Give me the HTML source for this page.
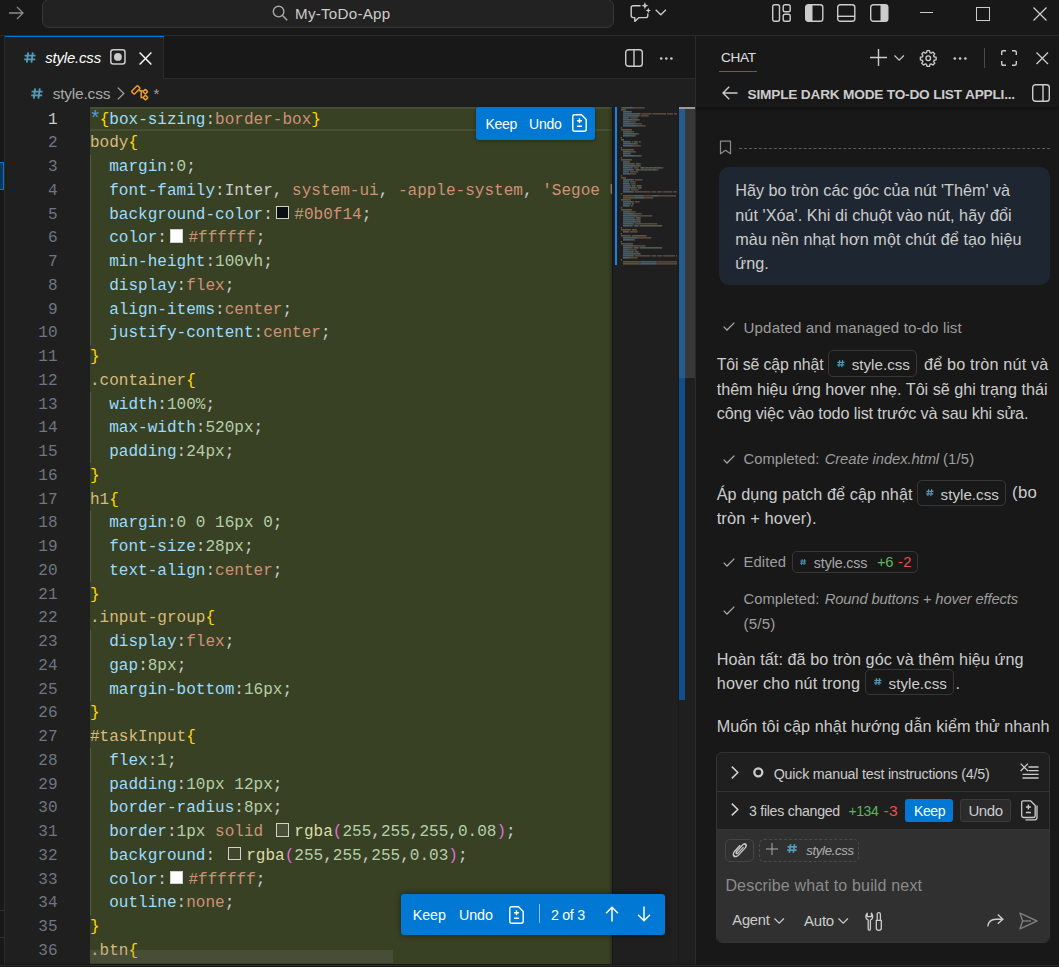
<!DOCTYPE html>
<html><head><meta charset="utf-8">
<style>
*{box-sizing:border-box;margin:0;padding:0}
html,body{width:1059px;height:967px;overflow:hidden;background:#181818;font-family:"Liberation Sans",sans-serif;color:#cccccc}
.a{position:absolute}
svg{position:absolute;overflow:visible}
#title{left:0;top:0;width:1059px;height:36px;background:#181818;border-bottom:1px solid #2b2b2b}
#search{left:42px;top:-1px;width:572px;height:29px;background:#222222;border:1px solid #363636;border-radius:7px}
#editor{left:5px;top:36px;width:691px;height:928px;background:#1f1f1f;border-right:1px solid #2b2b2b}
#tabbar{left:0;top:0;width:690px;height:43px;background:#181818;border-bottom:1px solid #2b2b2b}
#tab{left:0;top:0;width:159px;height:43px;background:#1f1f1f;border-right:1px solid #2b2b2b}
#code{left:85px;top:71px;width:522px;height:857px;background:#394124}
.ln{position:absolute;left:5px;width:52.6px;padding-top:1.5px;text-align:right;font-family:"Liberation Mono",monospace;font-size:16.04px;color:#6e7681;line-height:23.75px}
.cl{position:absolute;left:90px;padding-top:1.5px;white-space:pre;font-family:"Liberation Mono",monospace;font-size:16.04px;line-height:23.75px;color:#cccccc}
#chat{left:696px;top:36px;width:363px;height:928px;background:#181818}
.dec{display:inline-block;width:13.5px;height:13.5px;border:1px solid #d0d0d0;margin:0 5px 0 3px;position:relative;top:2px;vertical-align:top}
.ui{font-family:"Liberation Sans",sans-serif;white-space:nowrap;line-height:1}
.chip{border:1px solid #363636;border-radius:5px}
#status{left:0;top:964.5px;width:1059px;height:3px;background:#181818;border-top:1px solid #2b2b2b}
</style></head><body>
<div id="title" class="a">
  <svg style="left:8px;top:6px" width="16" height="14" viewBox="0 0 16 14"><path d="M1 7H15M9 1L15 7L9 13" fill="none" stroke="#8a8a8a" stroke-width="1.3"/></svg>
  <div id="search" class="a"></div>
</div>
<div id="sidebar" class="a" style="left:0;top:36px;width:5px;height:928px;background:#181818;border-right:1px solid #2b2b2b"></div>
<div id="editor" class="a">
  <div id="tabbar" class="a"><div id="tab" class="a"></div><div class="a" style="left:0;top:0;width:158.5px;height:1.4px;background:#0078d4"></div></div>
  <div id="code" class="a"></div>
</div>
<div id="lines" class="a" style="left:0;top:107px;width:612px;height:857px;overflow:hidden">
<div class="ln" style="top:0.00px;color:#cccccc">1</div>
<div class="cl" style="top:0.00px"><span style="color:#569cd6;font-size:20px;line-height:0;letter-spacing:-2.375px;position:relative;left:-0.8px;top:1.8px">*</span><span style="color:#ffd700">{</span><span style="color:#9cdcfe">box-sizing</span><span style="color:#cccccc">:</span><span style="color:#ce9178">border-box</span><span style="color:#ffd700">}</span></div>
<div class="ln" style="top:23.75px;color:#6e7681">2</div>
<div class="cl" style="top:23.75px"><span style="color:#d7ba7d">body</span><span style="color:#ffd700">{</span></div>
<div class="ln" style="top:47.50px;color:#6e7681">3</div>
<div class="cl" style="top:47.50px"><span style="color:#cccccc">  </span><span style="color:#9cdcfe">margin</span><span style="color:#cccccc">:</span><span style="color:#b5cea8">0</span><span style="color:#cccccc">;</span></div>
<div class="ln" style="top:71.25px;color:#6e7681">4</div>
<div class="cl" style="top:71.25px"><span style="color:#cccccc">  </span><span style="color:#9cdcfe">font-family</span><span style="color:#cccccc">:Inter, </span><span style="color:#ce9178">system-ui</span><span style="color:#cccccc">, </span><span style="color:#ce9178">-apple-system</span><span style="color:#cccccc">, </span><span style="color:#ce9178">&#x27;Segoe UI&#x27;</span></div>
<div class="ln" style="top:95.00px;color:#6e7681">5</div>
<div class="cl" style="top:95.00px"><span style="color:#cccccc">  </span><span style="color:#9cdcfe">background-color</span><span style="color:#cccccc">:</span><i class="dec" style="background:#0b0f14"></i><span style="color:#ce9178">#0b0f14</span><span style="color:#cccccc">;</span></div>
<div class="ln" style="top:118.75px;color:#6e7681">6</div>
<div class="cl" style="top:118.75px"><span style="color:#cccccc">  </span><span style="color:#9cdcfe">color</span><span style="color:#cccccc">:</span><i class="dec" style="background:#ffffff"></i><span style="color:#ce9178">#ffffff</span><span style="color:#cccccc">;</span></div>
<div class="ln" style="top:142.50px;color:#6e7681">7</div>
<div class="cl" style="top:142.50px"><span style="color:#cccccc">  </span><span style="color:#9cdcfe">min-height</span><span style="color:#cccccc">:</span><span style="color:#b5cea8">100vh</span><span style="color:#cccccc">;</span></div>
<div class="ln" style="top:166.25px;color:#6e7681">8</div>
<div class="cl" style="top:166.25px"><span style="color:#cccccc">  </span><span style="color:#9cdcfe">display</span><span style="color:#cccccc">:</span><span style="color:#ce9178">flex</span><span style="color:#cccccc">;</span></div>
<div class="ln" style="top:190.00px;color:#6e7681">9</div>
<div class="cl" style="top:190.00px"><span style="color:#cccccc">  </span><span style="color:#9cdcfe">align-items</span><span style="color:#cccccc">:</span><span style="color:#ce9178">center</span><span style="color:#cccccc">;</span></div>
<div class="ln" style="top:213.75px;color:#6e7681">10</div>
<div class="cl" style="top:213.75px"><span style="color:#cccccc">  </span><span style="color:#9cdcfe">justify-content</span><span style="color:#cccccc">:</span><span style="color:#ce9178">center</span><span style="color:#cccccc">;</span></div>
<div class="ln" style="top:237.50px;color:#6e7681">11</div>
<div class="cl" style="top:237.50px"><span style="color:#ffd700">}</span></div>
<div class="ln" style="top:261.25px;color:#6e7681">12</div>
<div class="cl" style="top:261.25px"><span style="color:#d7ba7d">.container</span><span style="color:#ffd700">{</span></div>
<div class="ln" style="top:285.00px;color:#6e7681">13</div>
<div class="cl" style="top:285.00px"><span style="color:#cccccc">  </span><span style="color:#9cdcfe">width</span><span style="color:#cccccc">:</span><span style="color:#b5cea8">100%</span><span style="color:#cccccc">;</span></div>
<div class="ln" style="top:308.75px;color:#6e7681">14</div>
<div class="cl" style="top:308.75px"><span style="color:#cccccc">  </span><span style="color:#9cdcfe">max-width</span><span style="color:#cccccc">:</span><span style="color:#b5cea8">520px</span><span style="color:#cccccc">;</span></div>
<div class="ln" style="top:332.50px;color:#6e7681">15</div>
<div class="cl" style="top:332.50px"><span style="color:#cccccc">  </span><span style="color:#9cdcfe">padding</span><span style="color:#cccccc">:</span><span style="color:#b5cea8">24px</span><span style="color:#cccccc">;</span></div>
<div class="ln" style="top:356.25px;color:#6e7681">16</div>
<div class="cl" style="top:356.25px"><span style="color:#ffd700">}</span></div>
<div class="ln" style="top:380.00px;color:#6e7681">17</div>
<div class="cl" style="top:380.00px"><span style="color:#d7ba7d">h1</span><span style="color:#ffd700">{</span></div>
<div class="ln" style="top:403.75px;color:#6e7681">18</div>
<div class="cl" style="top:403.75px"><span style="color:#cccccc">  </span><span style="color:#9cdcfe">margin</span><span style="color:#cccccc">:</span><span style="color:#b5cea8">0 0 16px 0</span><span style="color:#cccccc">;</span></div>
<div class="ln" style="top:427.50px;color:#6e7681">19</div>
<div class="cl" style="top:427.50px"><span style="color:#cccccc">  </span><span style="color:#9cdcfe">font-size</span><span style="color:#cccccc">:</span><span style="color:#b5cea8">28px</span><span style="color:#cccccc">;</span></div>
<div class="ln" style="top:451.25px;color:#6e7681">20</div>
<div class="cl" style="top:451.25px"><span style="color:#cccccc">  </span><span style="color:#9cdcfe">text-align</span><span style="color:#cccccc">:</span><span style="color:#ce9178">center</span><span style="color:#cccccc">;</span></div>
<div class="ln" style="top:475.00px;color:#6e7681">21</div>
<div class="cl" style="top:475.00px"><span style="color:#ffd700">}</span></div>
<div class="ln" style="top:498.75px;color:#6e7681">22</div>
<div class="cl" style="top:498.75px"><span style="color:#d7ba7d">.input-group</span><span style="color:#ffd700">{</span></div>
<div class="ln" style="top:522.50px;color:#6e7681">23</div>
<div class="cl" style="top:522.50px"><span style="color:#cccccc">  </span><span style="color:#9cdcfe">display</span><span style="color:#cccccc">:</span><span style="color:#ce9178">flex</span><span style="color:#cccccc">;</span></div>
<div class="ln" style="top:546.25px;color:#6e7681">24</div>
<div class="cl" style="top:546.25px"><span style="color:#cccccc">  </span><span style="color:#9cdcfe">gap</span><span style="color:#cccccc">:</span><span style="color:#b5cea8">8px</span><span style="color:#cccccc">;</span></div>
<div class="ln" style="top:570.00px;color:#6e7681">25</div>
<div class="cl" style="top:570.00px"><span style="color:#cccccc">  </span><span style="color:#9cdcfe">margin-bottom</span><span style="color:#cccccc">:</span><span style="color:#b5cea8">16px</span><span style="color:#cccccc">;</span></div>
<div class="ln" style="top:593.75px;color:#6e7681">26</div>
<div class="cl" style="top:593.75px"><span style="color:#ffd700">}</span></div>
<div class="ln" style="top:617.50px;color:#6e7681">27</div>
<div class="cl" style="top:617.50px"><span style="color:#d7ba7d">#taskInput</span><span style="color:#ffd700">{</span></div>
<div class="ln" style="top:641.25px;color:#6e7681">28</div>
<div class="cl" style="top:641.25px"><span style="color:#cccccc">  </span><span style="color:#9cdcfe">flex</span><span style="color:#cccccc">:</span><span style="color:#b5cea8">1</span><span style="color:#cccccc">;</span></div>
<div class="ln" style="top:665.00px;color:#6e7681">29</div>
<div class="cl" style="top:665.00px"><span style="color:#cccccc">  </span><span style="color:#9cdcfe">padding</span><span style="color:#cccccc">:</span><span style="color:#b5cea8">10px 12px</span><span style="color:#cccccc">;</span></div>
<div class="ln" style="top:688.75px;color:#6e7681">30</div>
<div class="cl" style="top:688.75px"><span style="color:#cccccc">  </span><span style="color:#9cdcfe">border-radius</span><span style="color:#cccccc">:</span><span style="color:#b5cea8">8px</span><span style="color:#cccccc">;</span></div>
<div class="ln" style="top:712.50px;color:#6e7681">31</div>
<div class="cl" style="top:712.50px"><span style="color:#cccccc">  </span><span style="color:#9cdcfe">border</span><span style="color:#cccccc">:</span><span style="color:#b5cea8">1px</span><span style="color:#cccccc"> </span><span style="color:#ce9178">solid</span><span style="color:#cccccc"> </span><i class="dec" style="background:rgba(255,255,255,0.08)"></i><span style="color:#dcdcaa">rgba</span><span style="color:#da70d6">(</span><span style="color:#b5cea8">255</span><span style="color:#cccccc">,</span><span style="color:#b5cea8">255</span><span style="color:#cccccc">,</span><span style="color:#b5cea8">255</span><span style="color:#cccccc">,</span><span style="color:#b5cea8">0.08</span><span style="color:#da70d6">)</span><span style="color:#cccccc">;</span></div>
<div class="ln" style="top:736.25px;color:#6e7681">32</div>
<div class="cl" style="top:736.25px"><span style="color:#cccccc">  </span><span style="color:#9cdcfe">background</span><span style="color:#cccccc">: </span><i class="dec" style="background:rgba(255,255,255,0.03)"></i><span style="color:#dcdcaa">rgba</span><span style="color:#da70d6">(</span><span style="color:#b5cea8">255</span><span style="color:#cccccc">,</span><span style="color:#b5cea8">255</span><span style="color:#cccccc">,</span><span style="color:#b5cea8">255</span><span style="color:#cccccc">,</span><span style="color:#b5cea8">0.03</span><span style="color:#da70d6">)</span><span style="color:#cccccc">;</span></div>
<div class="ln" style="top:760.00px;color:#6e7681">33</div>
<div class="cl" style="top:760.00px"><span style="color:#cccccc">  </span><span style="color:#9cdcfe">color</span><span style="color:#cccccc">:</span><i class="dec" style="background:#ffffff"></i><span style="color:#ce9178">#ffffff</span><span style="color:#cccccc">;</span></div>
<div class="ln" style="top:783.75px;color:#6e7681">34</div>
<div class="cl" style="top:783.75px"><span style="color:#cccccc">  </span><span style="color:#9cdcfe">outline</span><span style="color:#cccccc">:</span><span style="color:#ce9178">none</span><span style="color:#cccccc">;</span></div>
<div class="ln" style="top:807.50px;color:#6e7681">35</div>
<div class="cl" style="top:807.50px"><span style="color:#ffd700">}</span></div>
<div class="ln" style="top:831.25px;color:#6e7681">36</div>
<div class="cl" style="top:831.25px"><span style="color:#d7ba7d">.btn</span><span style="color:#ffd700">{</span></div>
</div>
<div id="chat" class="a">
</div>
<!-- editor decorations -->
<div class="a" style="left:90px;top:107px;width:522px;height:2px;background:#474f33"></div>
<div class="a" style="left:90px;top:129px;width:522px;height:2px;background:#474f33"></div>
<div class="a" style="left:615px;top:107px;width:2.2px;height:158px;background:#1b81e8"></div>
<!-- indent guides --><div class="a" style="left:90px;top:154.5px;width:1.1px;height:190.0px;background:#525c3f"></div><div class="a" style="left:90px;top:392.0px;width:1.1px;height:71.25px;background:#525c3f"></div><div class="a" style="left:90px;top:510.75px;width:1.1px;height:71.25px;background:#525c3f"></div><div class="a" style="left:90px;top:629.5px;width:1.1px;height:71.25px;background:#525c3f"></div><div class="a" style="left:90px;top:748.25px;width:1.1px;height:166.25px;background:#525c3f"></div>
<!-- minimap shadow --><div class="a" style="left:608px;top:107px;width:4.5px;height:857px;background:linear-gradient(90deg,rgba(0,0,0,0),rgba(0,0,0,0.3))"></div>
<svg style="left:621px;top:107px;opacity:0.42" width="60" height="158"><rect x="0.0" y="0.2" width="1.0" height="1.3" fill="#569cd6"/><rect x="1.0" y="0.2" width="1.0" height="1.3" fill="#ffd700"/><rect x="2.0" y="0.2" width="9.8" height="1.3" fill="#9cdcfe"/><rect x="11.8" y="0.2" width="1.0" height="1.3" fill="#cccccc"/><rect x="12.7" y="0.2" width="9.8" height="1.3" fill="#ce9178"/><rect x="22.5" y="0.2" width="1.0" height="1.3" fill="#ffd700"/><rect x="0.0" y="2.2" width="3.9" height="1.3" fill="#d7ba7d"/><rect x="3.9" y="2.2" width="1.0" height="1.3" fill="#ffd700"/><rect x="2.0" y="4.2" width="5.9" height="1.3" fill="#9cdcfe"/><rect x="7.8" y="4.2" width="1.0" height="1.3" fill="#cccccc"/><rect x="8.8" y="4.2" width="1.0" height="1.3" fill="#b5cea8"/><rect x="9.8" y="4.2" width="1.0" height="1.3" fill="#cccccc"/><rect x="2.0" y="6.2" width="10.8" height="1.3" fill="#9cdcfe"/><rect x="12.7" y="6.2" width="6.9" height="1.3" fill="#cccccc"/><rect x="20.6" y="6.2" width="8.8" height="1.3" fill="#ce9178"/><rect x="29.4" y="6.2" width="1.0" height="1.3" fill="#cccccc"/><rect x="31.4" y="6.2" width="12.7" height="1.3" fill="#ce9178"/><rect x="44.1" y="6.2" width="1.0" height="1.3" fill="#cccccc"/><rect x="46.1" y="6.2" width="5.9" height="1.3" fill="#ce9178"/><rect x="52.9" y="6.2" width="2.9" height="1.3" fill="#ce9178"/><rect x="2.0" y="8.2" width="15.7" height="1.3" fill="#9cdcfe"/><rect x="17.6" y="8.2" width="1.0" height="1.3" fill="#cccccc"/><rect x="19.6" y="8.2" width="6.9" height="1.3" fill="#ce9178"/><rect x="26.5" y="8.2" width="1.0" height="1.3" fill="#cccccc"/><rect x="2.0" y="10.2" width="4.9" height="1.3" fill="#9cdcfe"/><rect x="6.9" y="10.2" width="1.0" height="1.3" fill="#cccccc"/><rect x="8.8" y="10.2" width="6.9" height="1.3" fill="#ce9178"/><rect x="15.7" y="10.2" width="1.0" height="1.3" fill="#cccccc"/><rect x="2.0" y="12.2" width="9.8" height="1.3" fill="#9cdcfe"/><rect x="11.8" y="12.2" width="1.0" height="1.3" fill="#cccccc"/><rect x="12.7" y="12.2" width="4.9" height="1.3" fill="#b5cea8"/><rect x="17.6" y="12.2" width="1.0" height="1.3" fill="#cccccc"/><rect x="2.0" y="14.2" width="6.9" height="1.3" fill="#9cdcfe"/><rect x="8.8" y="14.2" width="1.0" height="1.3" fill="#cccccc"/><rect x="9.8" y="14.2" width="3.9" height="1.3" fill="#ce9178"/><rect x="13.7" y="14.2" width="1.0" height="1.3" fill="#cccccc"/><rect x="2.0" y="16.2" width="10.8" height="1.3" fill="#9cdcfe"/><rect x="12.7" y="16.2" width="1.0" height="1.3" fill="#cccccc"/><rect x="13.7" y="16.2" width="5.9" height="1.3" fill="#ce9178"/><rect x="19.6" y="16.2" width="1.0" height="1.3" fill="#cccccc"/><rect x="2.0" y="18.2" width="14.7" height="1.3" fill="#9cdcfe"/><rect x="16.7" y="18.2" width="1.0" height="1.3" fill="#cccccc"/><rect x="17.6" y="18.2" width="5.9" height="1.3" fill="#ce9178"/><rect x="23.5" y="18.2" width="1.0" height="1.3" fill="#cccccc"/><rect x="0.0" y="20.2" width="1.0" height="1.3" fill="#ffd700"/><rect x="0.0" y="22.2" width="9.8" height="1.3" fill="#d7ba7d"/><rect x="9.8" y="22.2" width="1.0" height="1.3" fill="#ffd700"/><rect x="2.0" y="24.2" width="4.9" height="1.3" fill="#9cdcfe"/><rect x="6.9" y="24.2" width="1.0" height="1.3" fill="#cccccc"/><rect x="7.8" y="24.2" width="3.9" height="1.3" fill="#b5cea8"/><rect x="11.8" y="24.2" width="1.0" height="1.3" fill="#cccccc"/><rect x="2.0" y="26.2" width="8.8" height="1.3" fill="#9cdcfe"/><rect x="10.8" y="26.2" width="1.0" height="1.3" fill="#cccccc"/><rect x="11.8" y="26.2" width="4.9" height="1.3" fill="#b5cea8"/><rect x="16.7" y="26.2" width="1.0" height="1.3" fill="#cccccc"/><rect x="2.0" y="28.2" width="6.9" height="1.3" fill="#9cdcfe"/><rect x="8.8" y="28.2" width="1.0" height="1.3" fill="#cccccc"/><rect x="9.8" y="28.2" width="3.9" height="1.3" fill="#b5cea8"/><rect x="13.7" y="28.2" width="1.0" height="1.3" fill="#cccccc"/><rect x="0.0" y="30.2" width="1.0" height="1.3" fill="#ffd700"/><rect x="0.0" y="32.2" width="2.0" height="1.3" fill="#d7ba7d"/><rect x="2.0" y="32.2" width="1.0" height="1.3" fill="#ffd700"/><rect x="2.0" y="34.2" width="5.9" height="1.3" fill="#9cdcfe"/><rect x="7.8" y="34.2" width="1.0" height="1.3" fill="#cccccc"/><rect x="8.8" y="34.2" width="1.0" height="1.3" fill="#b5cea8"/><rect x="10.8" y="34.2" width="1.0" height="1.3" fill="#b5cea8"/><rect x="12.7" y="34.2" width="3.9" height="1.3" fill="#b5cea8"/><rect x="17.6" y="34.2" width="1.0" height="1.3" fill="#b5cea8"/><rect x="18.6" y="34.2" width="1.0" height="1.3" fill="#cccccc"/><rect x="2.0" y="36.2" width="8.8" height="1.3" fill="#9cdcfe"/><rect x="10.8" y="36.2" width="1.0" height="1.3" fill="#cccccc"/><rect x="11.8" y="36.2" width="3.9" height="1.3" fill="#b5cea8"/><rect x="15.7" y="36.2" width="1.0" height="1.3" fill="#cccccc"/><rect x="2.0" y="38.2" width="9.8" height="1.3" fill="#9cdcfe"/><rect x="11.8" y="38.2" width="1.0" height="1.3" fill="#cccccc"/><rect x="12.7" y="38.2" width="5.9" height="1.3" fill="#ce9178"/><rect x="18.6" y="38.2" width="1.0" height="1.3" fill="#cccccc"/><rect x="0.0" y="40.2" width="1.0" height="1.3" fill="#ffd700"/><rect x="0.0" y="42.2" width="11.8" height="1.3" fill="#d7ba7d"/><rect x="11.8" y="42.2" width="1.0" height="1.3" fill="#ffd700"/><rect x="2.0" y="44.2" width="6.9" height="1.3" fill="#9cdcfe"/><rect x="8.8" y="44.2" width="1.0" height="1.3" fill="#cccccc"/><rect x="9.8" y="44.2" width="3.9" height="1.3" fill="#ce9178"/><rect x="13.7" y="44.2" width="1.0" height="1.3" fill="#cccccc"/><rect x="2.0" y="46.2" width="2.9" height="1.3" fill="#9cdcfe"/><rect x="4.9" y="46.2" width="1.0" height="1.3" fill="#cccccc"/><rect x="5.9" y="46.2" width="2.9" height="1.3" fill="#b5cea8"/><rect x="8.8" y="46.2" width="1.0" height="1.3" fill="#cccccc"/><rect x="2.0" y="48.2" width="12.7" height="1.3" fill="#9cdcfe"/><rect x="14.7" y="48.2" width="1.0" height="1.3" fill="#cccccc"/><rect x="15.7" y="48.2" width="3.9" height="1.3" fill="#b5cea8"/><rect x="19.6" y="48.2" width="1.0" height="1.3" fill="#cccccc"/><rect x="0.0" y="50.2" width="1.0" height="1.3" fill="#ffd700"/><rect x="0.0" y="52.2" width="9.8" height="1.3" fill="#d7ba7d"/><rect x="9.8" y="52.2" width="1.0" height="1.3" fill="#ffd700"/><rect x="2.0" y="54.2" width="3.9" height="1.3" fill="#9cdcfe"/><rect x="5.9" y="54.2" width="1.0" height="1.3" fill="#cccccc"/><rect x="6.9" y="54.2" width="1.0" height="1.3" fill="#b5cea8"/><rect x="7.8" y="54.2" width="1.0" height="1.3" fill="#cccccc"/><rect x="2.0" y="56.2" width="6.9" height="1.3" fill="#9cdcfe"/><rect x="8.8" y="56.2" width="1.0" height="1.3" fill="#cccccc"/><rect x="9.8" y="56.2" width="3.9" height="1.3" fill="#b5cea8"/><rect x="14.7" y="56.2" width="3.9" height="1.3" fill="#b5cea8"/><rect x="18.6" y="56.2" width="1.0" height="1.3" fill="#cccccc"/><rect x="2.0" y="58.2" width="12.7" height="1.3" fill="#9cdcfe"/><rect x="14.7" y="58.2" width="1.0" height="1.3" fill="#cccccc"/><rect x="15.7" y="58.2" width="2.9" height="1.3" fill="#b5cea8"/><rect x="18.6" y="58.2" width="1.0" height="1.3" fill="#cccccc"/><rect x="2.0" y="60.2" width="5.9" height="1.3" fill="#9cdcfe"/><rect x="7.8" y="60.2" width="1.0" height="1.3" fill="#cccccc"/><rect x="8.8" y="60.2" width="2.9" height="1.3" fill="#b5cea8"/><rect x="12.7" y="60.2" width="4.9" height="1.3" fill="#ce9178"/><rect x="19.6" y="60.2" width="3.9" height="1.3" fill="#dcdcaa"/><rect x="23.5" y="60.2" width="1.0" height="1.3" fill="#da70d6"/><rect x="24.5" y="60.2" width="2.9" height="1.3" fill="#b5cea8"/><rect x="27.4" y="60.2" width="1.0" height="1.3" fill="#cccccc"/><rect x="28.4" y="60.2" width="2.9" height="1.3" fill="#b5cea8"/><rect x="31.4" y="60.2" width="1.0" height="1.3" fill="#cccccc"/><rect x="32.3" y="60.2" width="2.9" height="1.3" fill="#b5cea8"/><rect x="35.3" y="60.2" width="1.0" height="1.3" fill="#cccccc"/><rect x="36.3" y="60.2" width="3.9" height="1.3" fill="#b5cea8"/><rect x="40.2" y="60.2" width="1.0" height="1.3" fill="#da70d6"/><rect x="41.2" y="60.2" width="1.0" height="1.3" fill="#cccccc"/><rect x="2.0" y="62.2" width="9.8" height="1.3" fill="#9cdcfe"/><rect x="11.8" y="62.2" width="1.0" height="1.3" fill="#cccccc"/><rect x="14.7" y="62.2" width="3.9" height="1.3" fill="#dcdcaa"/><rect x="18.6" y="62.2" width="1.0" height="1.3" fill="#da70d6"/><rect x="19.6" y="62.2" width="2.9" height="1.3" fill="#b5cea8"/><rect x="22.5" y="62.2" width="1.0" height="1.3" fill="#cccccc"/><rect x="23.5" y="62.2" width="2.9" height="1.3" fill="#b5cea8"/><rect x="26.5" y="62.2" width="1.0" height="1.3" fill="#cccccc"/><rect x="27.4" y="62.2" width="2.9" height="1.3" fill="#b5cea8"/><rect x="30.4" y="62.2" width="1.0" height="1.3" fill="#cccccc"/><rect x="31.4" y="62.2" width="3.9" height="1.3" fill="#b5cea8"/><rect x="35.3" y="62.2" width="1.0" height="1.3" fill="#da70d6"/><rect x="36.3" y="62.2" width="1.0" height="1.3" fill="#cccccc"/><rect x="2.0" y="64.2" width="4.9" height="1.3" fill="#9cdcfe"/><rect x="6.9" y="64.2" width="1.0" height="1.3" fill="#cccccc"/><rect x="8.8" y="64.2" width="6.9" height="1.3" fill="#ce9178"/><rect x="15.7" y="64.2" width="1.0" height="1.3" fill="#cccccc"/><rect x="2.0" y="66.2" width="6.9" height="1.3" fill="#9cdcfe"/><rect x="8.8" y="66.2" width="1.0" height="1.3" fill="#cccccc"/><rect x="9.8" y="66.2" width="3.9" height="1.3" fill="#ce9178"/><rect x="13.7" y="66.2" width="1.0" height="1.3" fill="#cccccc"/><rect x="0.0" y="68.2" width="1.0" height="1.3" fill="#ffd700"/><rect x="0.0" y="70.2" width="3.9" height="1.3" fill="#d7ba7d"/><rect x="3.9" y="70.2" width="1.0" height="1.3" fill="#ffd700"/><rect x="2.0" y="72.2" width="9.8" height="1.3" fill="#9cdcfe"/><rect x="11.8" y="72.2" width="1.0" height="1.3" fill="#cccccc"/><rect x="13.7" y="72.2" width="7.8" height="1.3" fill="#ce9178"/><rect x="2.0" y="74.2" width="4.9" height="1.3" fill="#9cdcfe"/><rect x="6.9" y="74.2" width="1.0" height="1.3" fill="#cccccc"/><rect x="8.8" y="74.2" width="5.9" height="1.3" fill="#ce9178"/><rect x="2.0" y="76.2" width="5.9" height="1.3" fill="#9cdcfe"/><rect x="7.8" y="76.2" width="1.0" height="1.3" fill="#cccccc"/><rect x="9.8" y="76.2" width="4.9" height="1.3" fill="#ce9178"/><rect x="2.0" y="78.2" width="6.9" height="1.3" fill="#9cdcfe"/><rect x="8.8" y="78.2" width="1.0" height="1.3" fill="#cccccc"/><rect x="10.8" y="78.2" width="3.9" height="1.3" fill="#b5cea8"/><rect x="15.7" y="78.2" width="4.9" height="1.3" fill="#b5cea8"/><rect x="2.0" y="80.2" width="12.7" height="1.3" fill="#9cdcfe"/><rect x="14.7" y="80.2" width="1.0" height="1.3" fill="#cccccc"/><rect x="16.7" y="80.2" width="3.9" height="1.3" fill="#b5cea8"/><rect x="2.0" y="82.2" width="5.9" height="1.3" fill="#9cdcfe"/><rect x="7.8" y="82.2" width="1.0" height="1.3" fill="#cccccc"/><rect x="9.8" y="82.2" width="7.8" height="1.3" fill="#ce9178"/><rect x="2.0" y="84.2" width="9.8" height="1.3" fill="#9cdcfe"/><rect x="11.8" y="84.2" width="1.0" height="1.3" fill="#cccccc"/><rect x="13.7" y="84.2" width="15.7" height="1.3" fill="#ce9178"/><rect x="30.4" y="84.2" width="4.9" height="1.3" fill="#ce9178"/><rect x="36.3" y="84.2" width="4.9" height="1.3" fill="#ce9178"/><rect x="42.1" y="84.2" width="8.8" height="1.3" fill="#ce9178"/><rect x="51.9" y="84.2" width="3.9" height="1.3" fill="#ce9178"/><rect x="0.0" y="86.2" width="1.0" height="1.3" fill="#ffd700"/><rect x="2.0" y="88.2" width="9.8" height="1.3" fill="#d7ba7d"/><rect x="11.8" y="88.2" width="1.0" height="1.3" fill="#ffd700"/><rect x="12.7" y="88.2" width="9.8" height="1.3" fill="#9cdcfe"/><rect x="22.5" y="88.2" width="1.0" height="1.3" fill="#cccccc"/><rect x="23.5" y="88.2" width="6.9" height="1.3" fill="#ce9178"/><rect x="30.4" y="88.2" width="1.0" height="1.3" fill="#cccccc"/><rect x="31.4" y="88.2" width="5.9" height="1.3" fill="#9cdcfe"/><rect x="37.2" y="88.2" width="1.0" height="1.3" fill="#cccccc"/><rect x="38.2" y="88.2" width="16.7" height="1.3" fill="#ce9178"/><rect x="2.0" y="90.2" width="10.8" height="1.3" fill="#d7ba7d"/><rect x="12.7" y="90.2" width="1.0" height="1.3" fill="#ffd700"/><rect x="13.7" y="90.2" width="9.8" height="1.3" fill="#9cdcfe"/><rect x="23.5" y="90.2" width="1.0" height="1.3" fill="#cccccc"/><rect x="24.5" y="90.2" width="7.8" height="1.3" fill="#ce9178"/><rect x="0.0" y="92.2" width="8.8" height="1.3" fill="#d7ba7d"/><rect x="8.8" y="92.2" width="1.0" height="1.3" fill="#ffd700"/><rect x="2.0" y="94.2" width="9.8" height="1.3" fill="#9cdcfe"/><rect x="11.8" y="94.2" width="1.0" height="1.3" fill="#cccccc"/><rect x="13.7" y="94.2" width="4.9" height="1.3" fill="#ce9178"/><rect x="2.0" y="96.2" width="6.9" height="1.3" fill="#9cdcfe"/><rect x="8.8" y="96.2" width="1.0" height="1.3" fill="#cccccc"/><rect x="10.8" y="96.2" width="2.0" height="1.3" fill="#b5cea8"/><rect x="2.0" y="98.2" width="5.9" height="1.3" fill="#9cdcfe"/><rect x="7.8" y="98.2" width="1.0" height="1.3" fill="#cccccc"/><rect x="9.8" y="98.2" width="2.0" height="1.3" fill="#b5cea8"/><rect x="0.0" y="100.2" width="1.0" height="1.3" fill="#ffd700"/><rect x="0.0" y="102.2" width="9.8" height="1.3" fill="#d7ba7d"/><rect x="9.8" y="102.2" width="1.0" height="1.3" fill="#ffd700"/><rect x="2.0" y="104.2" width="6.9" height="1.3" fill="#9cdcfe"/><rect x="8.8" y="104.2" width="1.0" height="1.3" fill="#cccccc"/><rect x="9.8" y="104.2" width="4.9" height="1.3" fill="#ce9178"/><rect x="2.0" y="106.2" width="10.8" height="1.3" fill="#9cdcfe"/><rect x="12.7" y="106.2" width="1.0" height="1.3" fill="#cccccc"/><rect x="13.7" y="106.2" width="6.9" height="1.3" fill="#ce9178"/><rect x="2.0" y="108.2" width="14.7" height="1.3" fill="#9cdcfe"/><rect x="16.7" y="108.2" width="1.0" height="1.3" fill="#cccccc"/><rect x="17.6" y="108.2" width="13.7" height="1.3" fill="#ce9178"/><rect x="2.0" y="110.2" width="6.9" height="1.3" fill="#9cdcfe"/><rect x="8.8" y="110.2" width="1.0" height="1.3" fill="#cccccc"/><rect x="9.8" y="110.2" width="3.9" height="1.3" fill="#b5cea8"/><rect x="14.7" y="110.2" width="4.9" height="1.3" fill="#b5cea8"/><rect x="2.0" y="112.2" width="12.7" height="1.3" fill="#9cdcfe"/><rect x="14.7" y="112.2" width="1.0" height="1.3" fill="#cccccc"/><rect x="15.7" y="112.2" width="3.9" height="1.3" fill="#b5cea8"/><rect x="2.0" y="114.2" width="12.7" height="1.3" fill="#9cdcfe"/><rect x="14.7" y="114.2" width="1.0" height="1.3" fill="#cccccc"/><rect x="15.7" y="114.2" width="3.9" height="1.3" fill="#b5cea8"/><rect x="2.0" y="116.2" width="9.8" height="1.3" fill="#9cdcfe"/><rect x="11.8" y="116.2" width="1.0" height="1.3" fill="#cccccc"/><rect x="13.7" y="116.2" width="22.5" height="1.3" fill="#ce9178"/><rect x="2.0" y="118.2" width="5.9" height="1.3" fill="#9cdcfe"/><rect x="7.8" y="118.2" width="1.0" height="1.3" fill="#cccccc"/><rect x="8.8" y="118.2" width="2.9" height="1.3" fill="#b5cea8"/><rect x="12.7" y="118.2" width="4.9" height="1.3" fill="#b5cea8"/><rect x="18.6" y="118.2" width="22.5" height="1.3" fill="#b5cea8"/><rect x="0.0" y="120.2" width="1.0" height="1.3" fill="#ffd700"/><rect x="0.0" y="122.2" width="9.8" height="1.3" fill="#d7ba7d"/><rect x="10.8" y="122.2" width="3.9" height="1.3" fill="#d7ba7d"/><rect x="14.7" y="122.2" width="1.0" height="1.3" fill="#ffd700"/><rect x="2.0" y="124.2" width="4.9" height="1.3" fill="#9cdcfe"/><rect x="6.9" y="124.2" width="1.0" height="1.3" fill="#cccccc"/><rect x="8.8" y="124.2" width="7.8" height="1.3" fill="#ce9178"/><rect x="0.0" y="126.2" width="1.0" height="1.3" fill="#ffd700"/><rect x="0.0" y="128.2" width="9.8" height="1.3" fill="#d7ba7d"/><rect x="10.8" y="128.2" width="13.7" height="1.3" fill="#d7ba7d"/><rect x="24.5" y="128.2" width="1.0" height="1.3" fill="#ffd700"/><rect x="2.0" y="130.2" width="14.7" height="1.3" fill="#9cdcfe"/><rect x="16.7" y="130.2" width="1.0" height="1.3" fill="#cccccc"/><rect x="17.6" y="130.2" width="12.7" height="1.3" fill="#ce9178"/><rect x="2.0" y="132.2" width="6.9" height="1.3" fill="#9cdcfe"/><rect x="8.8" y="132.2" width="1.0" height="1.3" fill="#cccccc"/><rect x="9.8" y="132.2" width="3.9" height="1.3" fill="#b5cea8"/><rect x="0.0" y="134.2" width="1.0" height="1.3" fill="#ffd700"/><rect x="0.0" y="136.2" width="10.8" height="1.3" fill="#d7ba7d"/><rect x="10.8" y="136.2" width="1.0" height="1.3" fill="#ffd700"/><rect x="2.0" y="138.2" width="9.8" height="1.3" fill="#9cdcfe"/><rect x="11.8" y="138.2" width="1.0" height="1.3" fill="#cccccc"/><rect x="12.7" y="138.2" width="11.8" height="1.3" fill="#ce9178"/><rect x="2.0" y="140.2" width="5.9" height="1.3" fill="#9cdcfe"/><rect x="7.8" y="140.2" width="1.0" height="1.3" fill="#cccccc"/><rect x="8.8" y="140.2" width="2.9" height="1.3" fill="#b5cea8"/><rect x="12.7" y="140.2" width="4.9" height="1.3" fill="#b5cea8"/><rect x="18.6" y="140.2" width="22.5" height="1.3" fill="#b5cea8"/><rect x="2.0" y="142.2" width="4.9" height="1.3" fill="#9cdcfe"/><rect x="6.9" y="142.2" width="1.0" height="1.3" fill="#cccccc"/><rect x="7.8" y="142.2" width="7.8" height="1.3" fill="#ce9178"/><rect x="2.0" y="144.2" width="6.9" height="1.3" fill="#9cdcfe"/><rect x="8.8" y="144.2" width="1.0" height="1.3" fill="#cccccc"/><rect x="9.8" y="144.2" width="2.9" height="1.3" fill="#b5cea8"/><rect x="13.7" y="144.2" width="3.9" height="1.3" fill="#b5cea8"/><rect x="2.0" y="146.2" width="12.7" height="1.3" fill="#9cdcfe"/><rect x="14.7" y="146.2" width="1.0" height="1.3" fill="#cccccc"/><rect x="15.7" y="146.2" width="3.9" height="1.3" fill="#b5cea8"/><rect x="2.0" y="148.2" width="9.8" height="1.3" fill="#9cdcfe"/><rect x="11.8" y="148.2" width="1.0" height="1.3" fill="#cccccc"/><rect x="13.7" y="148.2" width="15.7" height="1.3" fill="#ce9178"/><rect x="30.4" y="148.2" width="4.9" height="1.3" fill="#ce9178"/><rect x="36.3" y="148.2" width="4.9" height="1.3" fill="#ce9178"/><rect x="42.1" y="148.2" width="11.8" height="1.3" fill="#ce9178"/><rect x="54.9" y="148.2" width="1.1" height="1.3" fill="#ce9178"/><rect x="2.0" y="150.2" width="5.9" height="1.3" fill="#9cdcfe"/><rect x="7.8" y="150.2" width="1.0" height="1.3" fill="#cccccc"/><rect x="8.8" y="150.2" width="7.8" height="1.3" fill="#ce9178"/><rect x="0.0" y="152.2" width="1.0" height="1.3" fill="#ffd700"/><rect x="2.0" y="154.2" width="16.7" height="1.3" fill="#d7ba7d"/><rect x="18.6" y="154.2" width="1.0" height="1.3" fill="#ffd700"/><rect x="19.6" y="154.2" width="15.7" height="1.3" fill="#9cdcfe"/><rect x="35.3" y="154.2" width="1.0" height="1.3" fill="#cccccc"/><rect x="36.3" y="154.2" width="19.7" height="1.3" fill="#ce9178"/><rect x="2.0" y="156.2" width="16.7" height="1.3" fill="#d7ba7d"/><rect x="18.6" y="156.2" width="1.0" height="1.3" fill="#ffd700"/><rect x="19.6" y="156.2" width="15.7" height="1.3" fill="#9cdcfe"/><rect x="35.3" y="156.2" width="1.0" height="1.3" fill="#cccccc"/><rect x="36.3" y="156.2" width="19.7" height="1.3" fill="#ce9178"/></svg>
<div class="a" style="left:678px;top:107px;width:1px;height:857px;background:#1a1a1a"></div>
<div class="a" style="left:679px;top:107px;width:16px;height:271px;background:#383838"></div>
<div class="a" style="left:679px;top:107px;width:5.5px;height:271px;background:#245c8f"></div>
<div class="a" style="left:679px;top:378px;width:5.5px;height:322px;background:#0e4f8c"></div>
<div class="a" style="left:679px;top:107px;width:16px;height:2px;background:#9a9a9a"></div>
<div class="a" style="left:90px;top:950px;width:303px;height:13px;background:rgba(121,121,121,0.22)"></div>
<div class="a" style="left:0;top:162px;width:4px;height:28px;background:#04395e;border:1px solid #0078d4;border-left:0"></div>
<div class="a" style="left:0;top:910px;width:4px;height:1px;background:#2b2b2b"></div>
<div class="a" style="left:0;top:937px;width:4px;height:1px;background:#2b2b2b"></div>
<!-- top keep/undo widget -->
<div class="a" style="left:476.2px;top:107.3px;width:118.6px;height:32.4px;background:#0078d4;border-radius:3px;box-shadow:0 1px 4px rgba(0,0,0,0.35)"></div>
<div class="a ui" style="left:485.5px;top:116.5px;font-size:14px;color:#ffffff;letter-spacing:-0.3px">Keep</div>
<div class="a ui" style="left:529px;top:116.5px;font-size:14px;color:#ffffff;letter-spacing:-0.2px">Undo</div>
<svg style="left:572.4px;top:114.3px" width="15" height="18" viewBox="0 0 15 18"><path d="M2.5 0.8H9.5L14.2 5.5V15.2Q14.2 17.2 12.2 17.2H2.8Q0.8 17.2 0.8 15.2V2.8Q0.8 0.8 2.5 0.8Z" fill="none" stroke="#ffffff" stroke-width="1.4" stroke-linejoin="round"/><path d="M7.5 4.3V9.3M5 6.8H10M5 12.3H10" stroke="#ffffff" stroke-width="1.4"/></svg>
<!-- bottom keep/undo widget -->
<div class="a" style="left:401px;top:894px;width:264px;height:41px;background:#0078d4;border-radius:3px;box-shadow:0 0 6px rgba(0,0,0,0.45)"></div>
<div class="a ui" style="left:412.8px;top:907.5px;font-size:14.3px;color:#ffffff;letter-spacing:-0.1px">Keep</div>
<div class="a ui" style="left:459px;top:907.5px;font-size:14.3px;color:#ffffff;letter-spacing:-0.1px">Undo</div>
<svg style="left:509.4px;top:905.5px" width="15" height="18" viewBox="0 0 15 18"><path d="M2.5 0.8H9.5L14.2 5.5V15.2Q14.2 17.2 12.2 17.2H2.8Q0.8 17.2 0.8 15.2V2.8Q0.8 0.8 2.5 0.8Z" fill="none" stroke="#ffffff" stroke-width="1.4" stroke-linejoin="round"/><path d="M7.5 4.3V9.3M5 6.8H10M5 12.3H10" stroke="#ffffff" stroke-width="1.4"/></svg>
<div class="a" style="left:538.5px;top:904px;width:1.3px;height:19.3px;background:#8cbde8"></div>
<div class="a ui" style="left:550.9px;top:907.5px;font-size:14.3px;color:#ffffff;letter-spacing:-0.3px">2 of 3</div>
<svg style="left:604.5px;top:906px" width="14" height="16" viewBox="0 0 14 16"><path d="M7 15.5V1.2M1 7.2L7 1.2L13 7.2" fill="none" stroke="#ffffff" stroke-width="1.5"/></svg>
<svg style="left:636.8px;top:906px" width="14" height="16" viewBox="0 0 14 16"><path d="M7 0.5V14.8M1 8.8L7 14.8L13 8.8" fill="none" stroke="#ffffff" stroke-width="1.5"/></svg>

<div id="chatc" class="a" style="left:0;top:0;width:1059px;height:967px">
  <div class="a" style="left:719px;top:70.5px;width:38px;height:1.6px;background:#0078d4"></div>
  <div class="a" style="left:696px;top:107px;width:363px;height:5px;background:linear-gradient(#111111,rgba(24,24,24,0))"></div>
  <!-- bookmark + dashed -->
  <svg style="left:719px;top:140px" width="13" height="15" viewBox="0 0 13 15"><path d="M1.5 1.2H11.5V13.8L6.5 10.3L1.5 13.8Z" fill="none" stroke="#8b8b8b" stroke-width="1.2" stroke-linejoin="round"/></svg>
  <div class="a" style="left:739px;top:148px;width:311px;height:0;border-top:1px dashed #5a5a5a"></div>
  <!-- user bubble -->
  <div class="a" style="left:719px;top:167px;width:331px;height:118px;background:#1e2731;border-radius:10px"></div>
  <!-- chips -->
  <div class="a chip" style="left:828px;top:350px;width:89px;height:26.5px"></div>
  <div class="a chip" style="left:917px;top:479.5px;width:89px;height:26.5px"></div>
  <div class="a chip" style="left:865px;top:668.5px;width:89px;height:26.5px"></div>
  <div class="a chip" style="left:792.3px;top:551px;width:125.3px;height:21.8px"></div>
  <!-- input box -->
  <div class="a" style="left:716px;top:752px;width:334px;height:191px;background:#1f1f1f;border:1px solid #333333;border-radius:6px;overflow:hidden">
    <div class="a" style="left:0;top:37.5px;width:334px;height:1px;background:#333333"></div>
    <div class="a" style="left:0;top:75.5px;width:334px;height:116px;background:#303030;border-top:1px solid #353535"></div>
  </div>
  <div class="a" style="left:905.3px;top:799px;width:47.3px;height:22.6px;background:#0078d4;border-radius:3px"></div>
  <div class="a" style="left:960px;top:799px;width:50.8px;height:22.6px;background:#2b2b2b;border:1px solid #3a3a3a;border-radius:3px"></div>
  <div class="a" style="left:725.3px;top:838.5px;width:28.7px;height:23.2px;border:1px solid #454545;border-radius:5px"></div>
  <div class="a" style="left:759px;top:838.5px;width:99.5px;height:23.5px;border:1px dashed #4a4a4a;border-radius:5px"></div>
  <div class="a ui" style="left:735.30px;top:182.49px;font-size:16.2px;color:#cccccc;letter-spacing:-0.012px">Hãy bo tròn các góc của nút &#x27;Thêm&#x27; và</div>
<div class="a ui" style="left:735.30px;top:206.79px;font-size:16.2px;color:#cccccc;letter-spacing:0.050px">nút &#x27;Xóa&#x27;. Khi di chuột vào nút, hãy đổi</div>
<div class="a ui" style="left:735.30px;top:231.09px;font-size:16.2px;color:#cccccc;letter-spacing:0.083px">màu nền nhạt hơn một chút để tạo hiệu</div>
<div class="a ui" style="left:735.30px;top:255.39px;font-size:16.2px;color:#cccccc">ứng.</div>
<div class="a ui" style="left:743.60px;top:319.90px;font-size:15.12px;color:#9d9d9d;letter-spacing:0.106px">Updated and managed to-do list</div>
<div class="a ui" style="left:716.70px;top:356.57px;font-size:15.86px;color:#cccccc;letter-spacing:-0.110px">Tôi sẽ cập nhật</div>
<div class="a ui" style="left:924.00px;top:356.29px;font-size:16.2px;color:#cccccc;letter-spacing:0.175px">để bo tròn nút và</div>
<div class="a ui" style="left:716.70px;top:380.99px;font-size:16.2px;color:#cccccc;letter-spacing:-0.022px">thêm hiệu ứng hover nhẹ. Tôi sẽ ghi trạng thái</div>
<div class="a ui" style="left:716.70px;top:405.49px;font-size:16.2px;color:#cccccc;letter-spacing:-0.130px">công việc vào todo list trước và sau khi sửa.</div>
<div class="a ui" style="left:743.60px;top:452.37px;font-size:14.8px;color:#9d9d9d">Completed: </div>
<div class="a ui" style="left:716.70px;top:485.69px;font-size:16.2px;color:#cccccc;letter-spacing:0.095px">Áp dụng patch để cập nhật</div>
<div class="a ui" style="left:1012.00px;top:485.17px;font-size:16.81px;color:#cccccc;letter-spacing:0.303px">(bo</div>
<div class="a ui" style="left:716.70px;top:510.42px;font-size:16.51px;color:#cccccc;letter-spacing:0.095px">tròn + hover).</div>
<div class="a ui" style="left:743.60px;top:554.87px;font-size:14.8px;color:#9d9d9d;letter-spacing:0.083px">Edited</div>
<div class="a ui" style="left:743.60px;top:591.97px;font-size:14.8px;color:#9d9d9d">Completed: </div>
<div class="a ui" style="left:743.60px;top:615.67px;font-size:15.16px;color:#9d9d9d;letter-spacing:0.126px">(5/5)</div>
<div class="a ui" style="left:716.70px;top:651.09px;font-size:16.2px;color:#cccccc;letter-spacing:0.064px">Hoàn tất: đã bo tròn góc và thêm hiệu ứng</div>
<div class="a ui" style="left:716.70px;top:674.69px;font-size:16.2px;color:#cccccc;letter-spacing:0.212px">hover cho nút trong</div>
<div class="a ui" style="left:955.50px;top:674.69px;font-size:16.2px;color:#cccccc">.</div>
<div class="a ui" style="left:716.70px;top:718.29px;font-size:16.2px;color:#cccccc;letter-spacing:0.064px">Muốn tôi cập nhật hướng dẫn kiểm thử nhanh</div>
<div class="a ui" style="left:721.00px;top:51.49px;font-size:13.6px;color:#e0e0e0;letter-spacing:-0.304px">CHAT</div>
<div class="a ui" style="left:747.60px;top:87.50px;font-size:13.7px;color:#cccccc;font-weight:bold;letter-spacing:-0.221px">SIMPLE DARK MODE TO-DO LIST APPLI...</div>
<div class="a ui" style="left:824.70px;top:452.37px;font-size:14.8px;color:#9d9d9d;font-style:italic;letter-spacing:-0.093px">Create index.html</div>
<div class="a ui" style="left:943.00px;top:452.37px;font-size:14.8px;color:#9d9d9d;letter-spacing:0.187px">(1/5)</div>
<div class="a ui" style="left:824.70px;top:591.97px;font-size:14.8px;color:#9d9d9d;font-style:italic;letter-spacing:-0.156px">Round buttons + hover effects</div>
<div class="a ui" style="left:851.70px;top:357.13px;font-size:15.2px;color:#cccccc">style.css</div>
<div class="a ui" style="left:940.60px;top:486.53px;font-size:15.2px;color:#cccccc">style.css</div>
<div class="a ui" style="left:888.60px;top:675.53px;font-size:15.2px;color:#cccccc">style.css</div>
<div class="a ui" style="left:813.80px;top:555.68px;font-size:14.2px;color:#a9a9a9;letter-spacing:-0.096px">style.css</div>
<div class="a ui" style="left:876.90px;top:555.17px;font-size:14.8px;color:#5db65d;letter-spacing:-0.191px">+6</div>
<div class="a ui" style="left:898.00px;top:555.17px;font-size:14.8px;color:#f14c4c;letter-spacing:0.312px">-2</div>
<div class="a ui" style="left:773.70px;top:766.73px;font-size:14.26px;color:#cccccc;letter-spacing:-0.211px">Quick manual test instructions (4/5)</div>
<div class="a ui" style="left:749.00px;top:803.75px;font-size:14.12px;color:#cccccc;letter-spacing:-0.269px">3 files changed</div>
<div class="a ui" style="left:848.50px;top:803.81px;font-size:14.05px;color:#5db65d;letter-spacing:-0.451px">+134</div>
<div class="a ui" style="left:883.50px;top:802.58px;font-size:15.5px;color:#f14c4c;letter-spacing:0.308px">-3</div>
<div class="a ui" style="left:914.00px;top:803.79px;font-size:14.07px;color:#ffffff;letter-spacing:-0.458px">Keep</div>
<div class="a ui" style="left:968.40px;top:803.00px;font-size:15px;color:#cccccc;letter-spacing:-0.353px">Undo</div>
<div class="a ui" style="left:806.30px;top:844.38px;font-size:13.14px;color:#b0b0b0;font-style:italic;letter-spacing:-0.316px">style.css</div>
<div class="a ui" style="left:725.40px;top:877.13px;font-size:16.03px;color:#8b8b8b;letter-spacing:0.168px">Describe what to build next</div>
<div class="a ui" style="left:732.30px;top:912.82px;font-size:14.63px;color:#cccccc;letter-spacing:-0.158px">Agent</div>
<div class="a ui" style="left:804.00px;top:912.50px;font-size:15px;color:#cccccc;letter-spacing:-0.220px">Auto</div>
<div class="a ui" style="left:295.00px;top:5.65px;font-size:15.18px;color:#cccccc;letter-spacing:0.243px">My-ToDo-App</div>
<div class="a ui" style="left:52.70px;top:86.18px;font-size:15.5px;color:#a9a9a9;letter-spacing:-0.212px">style.css</div>
<div class="a ui" style="left:45.30px;top:51.26px;font-size:14.93px;color:#ffffff;font-style:italic;letter-spacing:-0.177px">style.css</div>
</div>
<div id="status" class="a"></div>
<!-- title bar icons -->
<svg style="left:271.5px;top:5px" width="16" height="16" viewBox="0 0 16 16"><circle cx="6.6" cy="6.6" r="5.3" fill="none" stroke="#a8a8a8" stroke-width="1.4"/><path d="M10.5 10.5L15.2 15.2" stroke="#a8a8a8" stroke-width="1.5"/></svg>
<svg style="left:630px;top:3px" width="20" height="20" viewBox="0 0 20 20"><path d="M10.5 2.7H3.2Q1.2 2.7 1.2 4.7V12.6Q1.2 14.6 3.2 14.6H4.8V18.4L9 14.6H15.5Q17.8 14.6 17.8 12.4V10.5" fill="none" stroke="#cccccc" stroke-width="1.4" stroke-linejoin="round"/><path d="M14.9 -0.9L15.9 1.8L18.5 2.7L15.9 3.6L14.9 6.3L13.9 3.6L11.3 2.7L13.9 1.8Z" fill="#cccccc"/><path d="M18.3 4.8L19.1 6.7L21 7.5L19.1 8.3L18.3 10.2L17.5 8.3L15.6 7.5L17.5 6.7Z" fill="#cccccc"/></svg>
<svg style="left:655px;top:9px" width="12" height="7" viewBox="0 0 12 7"><path d="M0.7 0.7L5.8 5.8L10.9 0.7" fill="none" stroke="#cccccc" stroke-width="1.3"/></svg>
<svg style="left:772px;top:4px" width="19" height="18" viewBox="0 0 19 18"><rect x="0.7" y="0.7" width="6.8" height="16.6" rx="1.8" fill="none" stroke="#cccccc" stroke-width="1.4"/><rect x="11.2" y="0.7" width="7" height="7" rx="1.8" fill="none" stroke="#cccccc" stroke-width="1.4"/><rect x="11.2" y="10.3" width="7" height="7" rx="1.8" fill="none" stroke="#cccccc" stroke-width="1.4"/></svg>
<svg style="left:804.5px;top:4px" width="18.5" height="18" viewBox="0 0 18.5 18"><rect x="0.7" y="0.7" width="17.1" height="16.6" rx="2.6" fill="none" stroke="#cccccc" stroke-width="1.4"/><path d="M3.3 0.7H7.5V17.3H3.3Q0.7 17.3 0.7 14.7V3.3Q0.7 0.7 3.3 0.7Z" fill="#cccccc"/></svg>
<svg style="left:837px;top:4px" width="18.5" height="18" viewBox="0 0 18.5 18"><rect x="0.7" y="0.7" width="17.1" height="16.6" rx="2.6" fill="none" stroke="#cccccc" stroke-width="1.4"/><path d="M0.7 12.3H17.8" stroke="#cccccc" stroke-width="1.4"/></svg>
<svg style="left:870px;top:4px" width="18.5" height="18" viewBox="0 0 18.5 18"><rect x="0.7" y="0.7" width="17.1" height="16.6" rx="2.6" fill="none" stroke="#cccccc" stroke-width="1.4"/><path d="M10.5 0.7H15.2Q17.8 0.7 17.8 3.3V14.7Q17.8 17.3 15.2 17.3H10.5Z" fill="#cccccc"/></svg>
<div class="a" style="left:920px;top:12px;width:13px;height:1.3px;background:#cccccc"></div>
<div class="a" style="left:976px;top:7px;width:13.5px;height:13.5px;border:1.3px solid #cccccc"></div>
<svg style="left:1033px;top:6.5px" width="14" height="14" viewBox="0 0 14 14"><path d="M0.5 0.5L13.5 13.5M13.5 0.5L0.5 13.5" stroke="#cccccc" stroke-width="1.3"/></svg>
<!-- tab icons -->
<svg style="left:23.6px;top:51.5px" width="12" height="11" viewBox="0 0 12 11"><path d="M4.2 0.3L2.8 10.7M8.8 0.3L7.4 10.7M0.6 3.6H11.6M0.2 7.4H11.2" stroke="#519aba" stroke-width="1.9"/></svg>
<svg style="left:110px;top:49px" width="16" height="16" viewBox="0 0 16 16"><rect x="0.8" y="0.8" width="14.2" height="14.2" rx="2.5" fill="none" stroke="#cccccc" stroke-width="1.5"/><circle cx="7.9" cy="7.9" r="3.9" fill="#cccccc"/></svg>
<svg style="left:139px;top:52px" width="13" height="13" viewBox="0 0 13 13"><path d="M0.6 0.6L12.4 12.4M12.4 0.6L0.6 12.4" stroke="#ffffff" stroke-width="1.4"/></svg>
<svg style="left:625px;top:49px" width="18" height="18" viewBox="0 0 18 18"><rect x="0.7" y="0.7" width="16.6" height="16.6" rx="2.8" fill="none" stroke="#cccccc" stroke-width="1.4"/><path d="M9 0.7V17.3" stroke="#cccccc" stroke-width="1.4"/></svg>
<svg style="left:659px;top:56.5px" width="15" height="3" viewBox="0 0 15 3"><circle cx="2.2" cy="1.5" r="1.3" fill="#cccccc"/><circle cx="7.3" cy="1.5" r="1.3" fill="#cccccc"/><circle cx="12.4" cy="1.5" r="1.3" fill="#cccccc"/></svg>
<!-- breadcrumb -->
<svg style="left:31px;top:87.5px" width="12" height="11" viewBox="0 0 12 11"><path d="M4.2 0.3L2.8 10.7M8.8 0.3L7.4 10.7M0.6 3.6H11.6M0.2 7.4H11.2" stroke="#519aba" stroke-width="1.9"/></svg>
<svg style="left:117px;top:87px" width="8" height="13" viewBox="0 0 8 13"><path d="M0.8 0.6L6.8 6.5L0.8 12.4" fill="none" stroke="#a0a0a0" stroke-width="1.3"/></svg>
<svg style="left:131px;top:85px" width="19" height="17" viewBox="0 0 19 17"><rect x="2.8" y="0.6" width="4" height="8.6" rx="0.8" transform="rotate(45 4.8 4.9)" fill="none" stroke="#ee9d28" stroke-width="1.5"/><path d="M7.6 5.8H11.8M10.2 5.8V12.4H12.2" fill="none" stroke="#ee9d28" stroke-width="1.5"/><rect x="12.6" y="5" width="3.4" height="3.4" rx="0.5" transform="rotate(45 14.3 6.7)" fill="none" stroke="#ee9d28" stroke-width="1.5"/><rect x="12.8" y="10.9" width="3.4" height="3.4" rx="0.5" transform="rotate(45 14.5 12.6)" fill="none" stroke="#ee9d28" stroke-width="1.5"/></svg>
<div class="a ui" style="left:153.5px;top:86px;font-size:15px;color:#a0a0a0">*</div>
<!-- chat header icons -->
<svg style="left:869.8px;top:49px" width="17" height="17" viewBox="0 0 17 17"><path d="M8.5 0V17M0 8.5H17" stroke="#cccccc" stroke-width="1.4"/></svg>
<svg style="left:893.8px;top:55px" width="11" height="6" viewBox="0 0 11 6"><path d="M0.5 0.5L5.2 5.2L9.9 0.5" fill="none" stroke="#cccccc" stroke-width="1.2"/></svg>
<svg style="left:918.5px;top:48.5px" width="18.5" height="18.5" viewBox="0 0 24 24"><path d="M10.3 2.2h3.4l.5 2.6 1.6.7 2.2-1.5 2.4 2.4-1.5 2.2.7 1.6 2.6.5v3.4l-2.6.5-.7 1.6 1.5 2.2-2.4 2.4-2.2-1.5-1.6.7-.5 2.6h-3.4l-.5-2.6-1.6-.7-2.2 1.5-2.4-2.4 1.5-2.2-.7-1.6-2.6-.5v-3.4l2.6-.5.7-1.6-1.5-2.2 2.4-2.4 2.2 1.5 1.6-.7z" fill="none" stroke="#cccccc" stroke-width="1.7" stroke-linejoin="round"/><circle cx="12" cy="12" r="3" fill="none" stroke="#cccccc" stroke-width="1.7"/></svg>
<svg style="left:953px;top:56.5px" width="15" height="3" viewBox="0 0 15 3"><circle cx="1.8" cy="1.5" r="1.3" fill="#cccccc"/><circle cx="7.1" cy="1.5" r="1.3" fill="#cccccc"/><circle cx="12.4" cy="1.5" r="1.3" fill="#cccccc"/></svg>
<div class="a" style="left:984px;top:48px;width:1px;height:20px;background:#4a4a4a"></div>
<svg style="left:1001px;top:50px" width="16" height="16" viewBox="0 0 16 16"><path d="M0.7 5V2.2Q0.7 0.7 2.2 0.7H5M11 0.7H13.8Q15.3 0.7 15.3 2.2V5M15.3 11V13.8Q15.3 15.3 13.8 15.3H11M5 15.3H2.2Q0.7 15.3 0.7 13.8V11" fill="none" stroke="#cccccc" stroke-width="1.4"/></svg>
<svg style="left:1035.5px;top:51.5px" width="12.5" height="12.5" viewBox="0 0 12.5 12.5"><path d="M0.5 0.5L12 12M12 0.5L0.5 12" stroke="#cccccc" stroke-width="1.3"/></svg>
<svg style="left:722px;top:86px" width="16" height="14" viewBox="0 0 16 14"><path d="M15.5 7H1.2M7.2 0.8L1 7L7.2 13.2" fill="none" stroke="#cccccc" stroke-width="1.4"/></svg>
<svg style="left:1032px;top:84.2px" width="18" height="18" viewBox="0 0 18 18"><rect x="0.7" y="0.7" width="16.6" height="16.6" rx="2.8" fill="none" stroke="#cccccc" stroke-width="1.4"/><path d="M11 0.7V17.3" stroke="#cccccc" stroke-width="1.4"/></svg>

<!-- chip hashes --><svg style="left:786.5px;top:844px" width="10.3" height="9" viewBox="0 0 12 11" preserveAspectRatio="none"><path d="M4.2 0.3L2.8 10.7M8.8 0.3L7.4 10.7M0.6 3.6H11.6M0.2 7.4H11.2" stroke="#519aba" stroke-width="2.1"/></svg><svg style="left:836.6px;top:360px" width="7.8" height="7.3" viewBox="0 0 12 11" preserveAspectRatio="none"><path d="M4.2 0.3L2.8 10.7M8.8 0.3L7.4 10.7M0.6 3.6H11.6M0.2 7.4H11.2" stroke="#519aba" stroke-width="1.7"/></svg><svg style="left:925.5px;top:489.4px" width="7.8" height="7.3" viewBox="0 0 12 11" preserveAspectRatio="none"><path d="M4.2 0.3L2.8 10.7M8.8 0.3L7.4 10.7M0.6 3.6H11.6M0.2 7.4H11.2" stroke="#519aba" stroke-width="1.7"/></svg><svg style="left:873.5px;top:678.4px" width="7.8" height="7.3" viewBox="0 0 12 11" preserveAspectRatio="none"><path d="M4.2 0.3L2.8 10.7M8.8 0.3L7.4 10.7M0.6 3.6H11.6M0.2 7.4H11.2" stroke="#519aba" stroke-width="1.7"/></svg><svg style="left:799.8px;top:559.3px" width="6.4" height="6.2" viewBox="0 0 12 11" preserveAspectRatio="none"><path d="M4.2 0.3L2.8 10.7M8.8 0.3L7.4 10.7M0.6 3.6H11.6M0.2 7.4H11.2" stroke="#519aba" stroke-width="1.7"/></svg>
<!-- check marks -->
<svg style="left:722.5px;top:322px" width="12" height="9" viewBox="0 0 12 9"><path d="M0.6 4.6L4 8L11.4 0.6" fill="none" stroke="#a8a8a8" stroke-width="1.3"/></svg>
<svg style="left:722.5px;top:454.5px" width="12" height="9" viewBox="0 0 12 9"><path d="M0.6 4.6L4 8L11.4 0.6" fill="none" stroke="#a8a8a8" stroke-width="1.3"/></svg>
<svg style="left:722.5px;top:558px" width="12" height="9" viewBox="0 0 12 9"><path d="M0.6 4.6L4 8L11.4 0.6" fill="none" stroke="#a8a8a8" stroke-width="1.3"/></svg>
<svg style="left:722.5px;top:606px" width="12" height="9" viewBox="0 0 12 9"><path d="M0.6 4.6L4 8L11.4 0.6" fill="none" stroke="#a8a8a8" stroke-width="1.3"/></svg>
<!-- box icons -->
<svg style="left:730.5px;top:766px" width="8" height="13" viewBox="0 0 8 13"><path d="M0.8 0.6L6.8 6.5L0.8 12.4" fill="none" stroke="#d4d4d4" stroke-width="1.5"/></svg>
<svg style="left:753px;top:766.8px" width="11" height="11" viewBox="0 0 11 11"><circle cx="5.3" cy="5.3" r="4" fill="none" stroke="#cccccc" stroke-width="2.3"/></svg>
<svg style="left:1019.5px;top:762.5px" width="19" height="16" viewBox="0 0 19 16"><path d="M0.6 0.6L8 8M8 0.6L0.6 8" stroke="#cccccc" stroke-width="1.3"/><path d="M8.5 4H18.6M8.5 7.6H18.6M2.5 11.3H18.6M2.5 15H18.6" stroke="#cccccc" stroke-width="1.3"/></svg>
<svg style="left:730.5px;top:803px" width="8" height="13" viewBox="0 0 8 13"><path d="M0.8 0.6L6.8 6.5L0.8 12.4" fill="none" stroke="#d4d4d4" stroke-width="1.5"/></svg>
<svg style="left:1020.5px;top:799.5px" width="19" height="22" viewBox="0 0 19 22"><path d="M16 5.5V17.5Q16 19.8 13.8 19.8H4.5" fill="none" stroke="#cccccc" stroke-width="1.3"/><path d="M2.4 0.8H9.5L14.2 5.5V15.2Q14.2 17.5 12.2 17.5H2.6Q0.7 17.5 0.7 15.5V2.6Q0.7 0.8 2.4 0.8Z" fill="#1f1f1f" stroke="#cccccc" stroke-width="1.3" stroke-linejoin="round"/><path d="M7.4 4.5V9.5M4.9 7H9.9M4.9 12.5H9.9" stroke="#cccccc" stroke-width="1.3"/></svg>
<svg style="left:731px;top:841px" width="17" height="17" viewBox="0 0 17 17"><g transform="rotate(42 8.5 8.5) translate(5.8 0.2) scale(0.62 0.9)"><path d="M6.5 5V13A1.7 1.7 0 0 1 3.1 13V3.6A3.1 3.1 0 0 1 9.3 3.6V14.2A4.4 4.4 0 0 1 0.5 14.2V6" fill="none" stroke="#cccccc" stroke-width="2" stroke-linecap="round"/></g></svg>
<svg style="left:765.6px;top:843px" width="12" height="12" viewBox="0 0 12 12"><path d="M6 0V12M0 6H12" stroke="#aaaaaa" stroke-width="1"/></svg>
<svg style="left:773.6px;top:918.3px" width="11" height="6" viewBox="0 0 11 6"><path d="M0.5 0.5L5.2 5.2L9.9 0.5" fill="none" stroke="#cccccc" stroke-width="1.2"/></svg>
<svg style="left:838.3px;top:918.3px" width="11" height="6" viewBox="0 0 11 6"><path d="M0.5 0.5L5.2 5.2L9.9 0.5" fill="none" stroke="#cccccc" stroke-width="1.2"/></svg>
<svg style="left:865px;top:911.5px" width="18" height="19" viewBox="0 0 18 19"><path d="M2.2 1.2Q0.6 3 0.9 5.3Q1.3 7.3 3.2 8V17Q3.2 18.2 4.3 18.2Q5.4 18.2 5.4 17V8Q7.3 7.3 7.7 5.3Q8 3 6.4 1.2V4.6H2.2Z" fill="none" stroke="#cccccc" stroke-width="1.3" stroke-linejoin="round"/><path d="M13.8 0.7Q15.4 0.7 15.4 2.3V8.3H12.2V2.3Q12.2 0.7 13.8 0.7ZM11.3 8.3H16.3V16.3Q16.3 18.3 13.8 18.3Q11.3 18.3 11.3 16.3Z" fill="none" stroke="#cccccc" stroke-width="1.3" stroke-linejoin="round"/></svg>
<svg style="left:987px;top:914.3px" width="17" height="13" viewBox="0 0 17 13"><path d="M0.8 12.5Q1.5 5.2 9 5.2H15.8M10.8 0.6L15.8 5.2L10.8 9.8" fill="none" stroke="#cccccc" stroke-width="1.4"/></svg>
<svg style="left:1018.5px;top:912px" width="19" height="18" viewBox="0 0 19 18"><path d="M1 1.2L18 9L1 16.8L3.6 9Z" fill="none" stroke="#7d7d7d" stroke-width="1.4" stroke-linejoin="round"/><path d="M3.6 9H12" stroke="#7d7d7d" stroke-width="1.4"/></svg>

</body></html>
